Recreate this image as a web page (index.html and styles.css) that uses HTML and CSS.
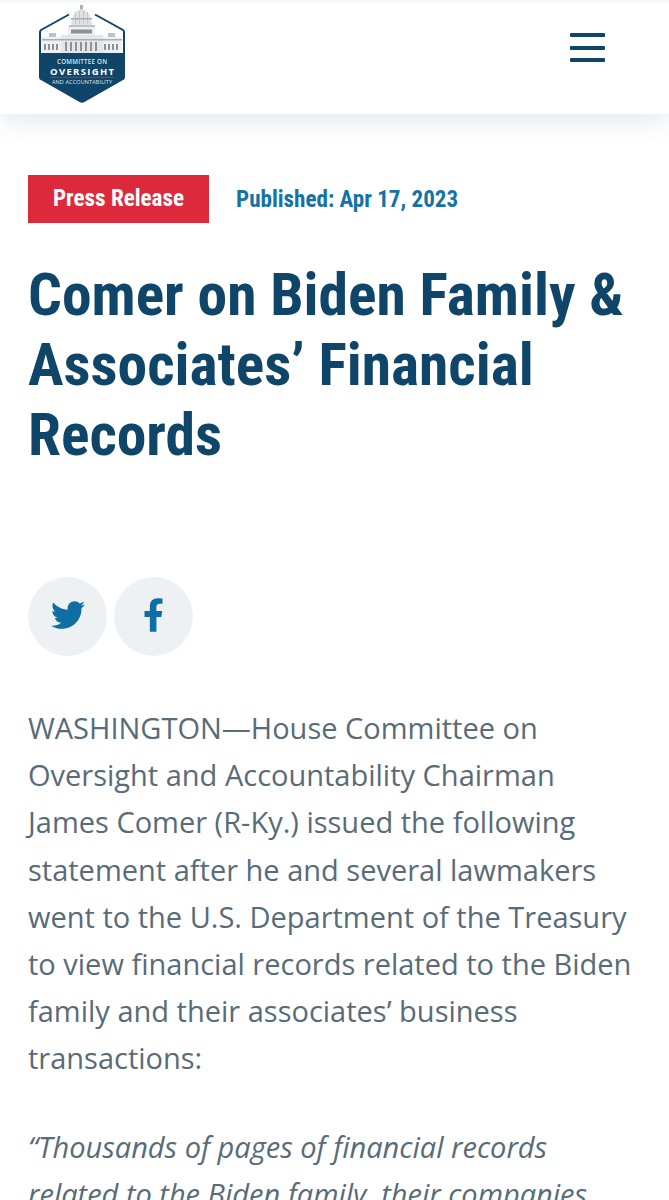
FILE: index.html
```html
<!DOCTYPE html>
<html lang="en">
<head>
    <meta charset="UTF-8">
    <meta name="viewport" content="width=device-width, initial-scale=1.0">
    <title>Comer on Biden Family &amp; Associates' Financial Records</title>
    <link rel="stylesheet" href="styles.css">
</head>
<body>
    <header class="site-header">
        <svg class="logo" viewBox="0 0 86 100" width="86" height="100" role="img" aria-label="Committee on Oversight and Accountability">
            <defs>
                <filter id="soft"><feGaussianBlur stdDeviation="0.45"/></filter>
            </defs>
            <path d="M30 11.500 L2 27 Q1 27.600 1 29 V74 Q1 75.500 2 76 L41 98.200 Q43 99.200 45 98.200 L84 76 Q85 75.500 85 74 V29 Q85 27.600 84 27 L56 11.500" fill="none" stroke="#0f4568" stroke-width="2"/>
            <path d="M1 50 H85 V74 Q85 75.500 84 76 L45 98.200 Q43 99.200 41 98.200 L2 76 Q1 75.500 1 74 Z" fill="#0f4568"/>
            <g filter="url(#soft)">
                <rect x="41" y="2" width="3" height="5" fill="#aab0b6"/>
                <path d="M32 22 Q33 8 42.500 6 Q52 8 53 22 Z" fill="#dfe2e4"/>
                <g fill="#c2c7cb">
                    <rect x="36" y="9" width="1" height="12"/><rect x="40" y="8" width="1" height="13"/><rect x="44" y="8" width="1" height="13"/><rect x="48" y="9" width="1" height="12"/>
                </g>
                <rect x="32" y="15" width="21" height="1.500" fill="#a7adb3"/>
                <rect x="30" y="22" width="26" height="2" fill="#bdc2c6"/>
                <rect x="29" y="24" width="27" height="9" fill="#eceeef"/>
                <rect x="3" y="34" width="80" height="16" fill="#eef0f1"/>
                <rect x="22" y="32" width="42" height="18" fill="#e4e6e8"/>
                <rect x="10" y="30" width="7" height="4" fill="#bdc2c6"/>
                <rect x="69" y="30" width="7" height="4" fill="#bdc2c6"/>
                <rect x="3" y="36" width="80" height="1.500" fill="#a7adb3"/>
                <g fill="#8b9298">
                    <rect x="5" y="41" width="2" height="6"/><rect x="9" y="41" width="2" height="6"/><rect x="13" y="41" width="2" height="6"/><rect x="17" y="41" width="2" height="6"/>
                    <rect x="26" y="39" width="2" height="9"/><rect x="31" y="39" width="2" height="9"/><rect x="36" y="39" width="2" height="9"/><rect x="41" y="39" width="2" height="9"/><rect x="46" y="39" width="2" height="9"/><rect x="51" y="39" width="2" height="9"/><rect x="56" y="39" width="2" height="9"/>
                    <rect x="65" y="41" width="2" height="6"/><rect x="69" y="41" width="2" height="6"/><rect x="73" y="41" width="2" height="6"/><rect x="77" y="41" width="2" height="6"/>
                    <rect x="32" y="26.500" width="21" height="4"/>
                </g>
            </g>
            <text class="logo-small" x="18" y="60.500" textLength="50">COMMITTEE ON</text>
            <text class="logo-big" x="11" y="71.500" textLength="64">OVERSIGHT</text>
            <rect x="11" y="73.800" width="64" height="1" fill="#a23a4c"/>
            <text class="logo-tiny" x="13" y="81" textLength="60">AND ACCOUNTABILITY</text>
        </svg>
        <button class="menu-btn" aria-label="Menu"><span></span><span></span><span></span></button>
    </header>

    <main class="article">
        <div class="meta">
            <span class="tag">Press Release</span>
            <span class="published">Published: Apr 17, 2023</span>
        </div>
        <h1>Comer on Biden Family &amp; Associates’ Financial Records</h1>
        <div class="share">
            <a class="share-btn" href="#" aria-label="Twitter">
                <svg viewBox="0 0 512 512" width="34" height="34"><path fill="#0f6fa3" d="M459.4 151.7c.3 4.5.3 9.100 .3 13.600 0 138.700-105.600 298.600-298.600 298.600-59.500 0-114.700-17.200-161.100-47.100 8.400 1 16.600 1.300 25.300 1.300 49.100 0 94.200-16.600 130.300-44.800-46.100-1-84.800-31.200-98.100-72.800 6.500 1 13 1.600 19.800 1.600 9.400 0 18.800-1.300 27.600-3.600-48.100-9.700-84.100-52-84.100-103v-1.300c14 7.800 30.200 12.700 47.400 13.300-28.300-18.800-46.800-51-46.800-87.400 0-19.500 5.200-37.400 14.300-53 51.700 63.700 129.300 105.300 216.400 109.800-1.600-7.800-2.600-15.900-2.600-24 0-57.800 46.800-104.900 104.900-104.900 30.200 0 57.500 12.700 76.700 33.100 23.700-4.500 46.500-13.300 66.600-25.300-7.800 24-24.400 44.200-46.100 57.200 21.100-2.300 41.600-8.100 60.400-16.200-14.300 20.800-32.200 39.300-52.600 54.300z"/></svg>
            </a>
            <a class="share-btn" href="#" aria-label="Facebook">
                <svg viewBox="0 0 320 512" width="21" height="34"><path fill="#0f6fa3" d="M279.100 288l14.200-92.700h-88.900v-60.100c0-25.400 12.400-50.100 52.200-50.100h40.400V6.300S260.400 0 225.400 0c-73.200 0-121.100 44.400-121.100 124.700v70.600H22.900V288h81.400v224h100.200V288z"/></svg>
            </a>
        </div>
        <p>WASHINGTON—House Committee on Oversight and Accountability Chairman James Comer (R-Ky.) issued the following statement after he and several lawmakers went to the U.S. Department of the Treasury to view financial records related to the Biden family and their associates’ business transactions:</p>
        <p class="quote">“Thousands of pages of financial records related to the Biden family, their companies</p>
    </main>
</body>
</html>
```

FILE: styles.css
```css
html, body {
    margin: 0;
    padding: 0;
    height: 1200px;
    overflow: hidden;
    background-color: #ffffff;
}
body {
    font-family: 'Open Sans', sans-serif;
}
.site-header {
    display: flex;
    justify-content: space-between;
    align-items: flex-start;
    height: 114px;
    box-sizing: border-box;
    padding: 0 64px 0 39px;
    border-top: 3px solid #f6f8fa;
    background-color: #ffffff;
    box-shadow: 0 6px 24px rgba(15, 69, 104, 0.12);
}
.logo {
    display: block;
}
.logo-small {
    font: 600 6.200px 'Open Sans', sans-serif;
    fill: #dfe6ea;
}
.logo-big {
    font: 700 9.500px 'Open Sans', sans-serif;
    fill: #ffffff;
}
.logo-tiny {
    font: 400 5.500px 'Open Sans', sans-serif;
    fill: #dfe6ea;
}
.menu-btn {
    display: flex;
    flex-direction: column;
    gap: 8.500px;
    margin-top: 30px;
    padding: 0;
    border: none;
    background: none;
}
.menu-btn span {
    display: block;
    width: 35px;
    height: 4px;
    border-radius: 1px;
    background-color: #0f4568;
}
.article {
    padding: 61px 28px 0;
}
.meta {
    display: flex;
    align-items: center;
    gap: 27px;
    font-family: Roboto, sans-serif;
    font-stretch: condensed;
    font-weight: 700;
    font-size: 23.100px;
}
.tag {
    width: 181px;
    height: 48px;
    line-height: 47px;
    text-align: center;
    color: #ffffff;
    background-color: #dc2a3c;
}
.published {
    color: #1373a6;
}
h1 {
    margin: 37px 0 0;
    font-family: Roboto, sans-serif;
    font-stretch: condensed;
    font-weight: 700;
    font-size: 59.500px;
    line-height: 70px;
    color: #0f4568;
}
.share {
    display: flex;
    gap: 7px;
    margin-top: 107px;
}
.share-btn {
    display: flex;
    justify-content: center;
    align-items: center;
    box-sizing: border-box;
    width: 79px;
    height: 79px;
    padding-bottom: 4px;
    border-radius: 50%;
    background-color: #edf1f4;
}
.article p {
    margin: 48px 0 0;
    font-size: 29px;
    line-height: 47.200px;
    color: #586b79;
}
.article p.quote {
    margin-top: 41px;
    font-style: italic;
}
```
